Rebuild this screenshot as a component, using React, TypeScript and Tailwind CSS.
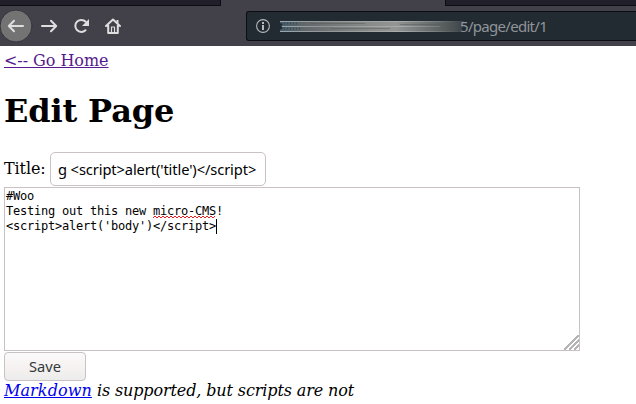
import React from "react";

function TabStrip() {
  return (
    <div className="flex h-[6px] bg-[#42414a]">
      <div className="h-[6px] w-[221px] border-r border-b border-[#0c0c13] bg-[#201f2a]" />
      <div className="w-[224px]" />
      <div className="h-[6px] flex-1 border-b border-l border-[#0c0c13] bg-[#201f2a]" />
    </div>
  );
}

function InfoIcon() {
  return (
    <svg width="14" height="14" viewBox="0 0 14 14" className="ml-[9px] shrink-0" fill="none">
      <circle cx="7" cy="7" r="6.4" stroke="#b4b8ba" strokeWidth="1.1" />
      <path d="M7 3v2M7 6v5" stroke="#c8cbcc" strokeWidth="1.8" />
    </svg>
  );
}

function RedactedHost() {
  return (
    <svg width="186" height="14" viewBox="0 0 186 14" className="ml-[10px] shrink-0">
      <defs>
        <linearGradient id="smearFill" gradientUnits="userSpaceOnUse" x1="0" x2="186" y1="0" y2="0">
          <stop offset="0" stopColor="#465c68" />
          <stop offset=".15" stopColor="#65696c" />
          <stop offset=".4" stopColor="#808482" />
          <stop offset=".62" stopColor="#939695" />
          <stop offset=".8" stopColor="#6a6f70" />
          <stop offset=".94" stopColor="#4b5052" />
          <stop offset="1" stopColor="#343d42" />
        </linearGradient>
        <linearGradient id="smearEdge" gradientUnits="userSpaceOnUse" x1="0" x2="186" y1="0" y2="0">
          <stop offset="0" stopColor="#98a6ab" />
          <stop offset=".25" stopColor="#919696" />
          <stop offset=".65" stopColor="#abadab" />
          <stop offset=".85" stopColor="#757b7c" />
          <stop offset="1" stopColor="#343d42" />
        </linearGradient>
      </defs>
      <path d="M0 2H184L181 13H0V11L3 9L1 7L3 5L0 4z" fill="url(#smearFill)" />
      <path d="M0 2h182v1H0zM2 7h158v1H2zM0 12h178v1H0z" fill="url(#smearEdge)" />
      <path d="M30 4.5h55M50 9.5h60M120 5.5h40" stroke="#53585a" opacity=".45" />
      <path d="M4 4.5h14M4 9.5h18" stroke="#263c50" strokeWidth="2" strokeDasharray="1 2" opacity=".55" />
    </svg>
  );
}

function Toolbar() {
  return (
    <div className="flex h-10 items-start bg-[#42414a]">
      <svg width="130" height="40" viewBox="0 6 130 40" className="shrink-0" fill="none" stroke="#dededf" strokeWidth="2" strokeLinecap="round" strokeLinejoin="round">
        <circle cx="16" cy="26" r="16" fill="#737373" stroke="#35343c" strokeWidth="1" />
        <path d="M23 26H9M14 20.8L8.8 26l5.2 5.2" />
        <path d="M42 26h14M51 20.8l5.2 5.2-5.2 5.2" />
        <path d="M85.5 30.2A6 6 0 1 1 85.7 21.8" />
        <path d="M89 19v7h-7z" fill="#dededf" stroke="none" />
        <path d="M106 26l7-6.5 7 6.5M108.2 25v8h9.6v-8" />
        <path d="M117.5 20v3" strokeLinecap="butt" />
        <path d="M111.5 33v-6h3v6" strokeWidth="1.2" />
      </svg>
      <div className="mt-[5px] ml-[116px] flex h-[30px] flex-1 items-center rounded-l-[3px] border border-r-0 border-[#0b0c15] bg-[#232b32]">
        <InfoIcon />
        <RedactedHost />
        <span className="-ml-[6px] font-['Noto_Sans',sans-serif] text-[15px] leading-5 tracking-[-0.7px] whitespace-nowrap text-[#8f9599]">5/page/edit/1</span>
      </div>
    </div>
  );
}

function BodyEditor() {
  return (
    <div className="relative mt-px h-[164px] w-[576px] border border-[#c9c1c4] bg-white pt-px pl-px font-['DejaVu_Sans_Mono',monospace] text-[12px] leading-[15px] tracking-[-0.224px] whitespace-pre">
      <div>#Woo</div>
      <div>
        Testing out this new{" "}
        <span className="relative">
          micro-CMS
          <svg className="absolute top-[11px] left-0" width="63" height="4" viewBox="0 0 63 4">
            <path d="M0 3L2 1l2 2 2-2 2 2 2-2 2 2 2-2 2 2 2-2 2 2 2-2 2 2 2-2 2 2 2-2 2 2 2-2 2 2 2-2 2 2 2-2 2 2 2-2 2 2 2-2 2 2 2-2 2 2 2-2 2 2 2-2" fill="none" stroke="#e02020" strokeWidth="1" />
          </svg>
        </span>
        !
      </div>
      <div className="flex">
        {"<script>alert('body')</script>"}
        <span className="h-[15px] w-px bg-black" />
      </div>
      <svg className="absolute right-0 bottom-0" width="15" height="15" viewBox="0 0 15 15" shapeRendering="crispEdges">
        <path d="M0 15L15 0M5 15L15 5M10 15l5-5" stroke="#b5b5b5" strokeWidth="1.5" />
      </svg>
    </div>
  );
}

export default function App() {
  return (
    <div className="h-[404px] w-[636px] overflow-hidden bg-white font-['DejaVu_Serif',serif] text-base text-black">
      <TabStrip />
      <Toolbar />
      <main className="px-1 pt-[5px]">
        <a href="#home" className="block h-[19px] w-fit leading-[19px] tracking-[-0.05px] text-[#551a8b] underline">{"<-- Go Home"}</a>
        <h1 className="mt-[23px] h-[37px] text-[32px] leading-[37px] font-bold tracking-[-0.15px]">Edit Page</h1>
        <div className="mt-[22px] flex h-[34px] items-center">
          <label className="mr-[5px] w-[41px] tracking-[-0.1px]">Title:</label>
          <div className="flex h-[34px] w-[216px] items-center rounded-[5px] border border-[#c9c1c4] px-[7px] font-['Noto_Sans',sans-serif] text-[14.67px] tracking-[-0.1px] whitespace-nowrap">
            {"g <script>alert('title')</script>"}
          </div>
        </div>
        <BodyEditor />
        <button className="mt-px block h-[29px] w-[82px] rounded-[4px] border border-[#c9c1c4] bg-linear-to-b from-[#fafafa] via-[#f6f2f1] to-[#ececec] font-['Noto_Sans',sans-serif] text-[14.67px] leading-[27px] text-[#333a3c]">Save</button>
        <p className="h-[19px] leading-[19px] tracking-[-0.12px] italic">
          <a href="#markdown" className="tracking-[0.1px] text-[#0000ee] underline">Markdown</a> is supported, but scripts are not
        </p>
      </main>
    </div>
  );
}
